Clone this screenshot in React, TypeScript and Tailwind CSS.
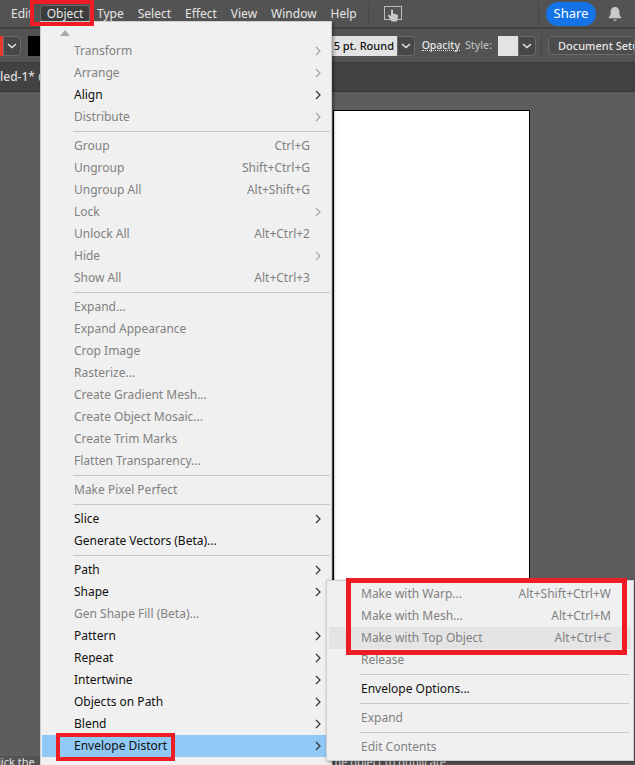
import React from "react";

const FONT = "font-['Noto_Sans','Open_Sans',sans-serif]";

type Row =
  | { sep: true }
  | { label: string; on?: boolean; arrow?: boolean; key2?: string; hi?: boolean };

const main: Row[] = [
  { label: "Transform", arrow: true },
  { label: "Arrange", arrow: true },
  { label: "Align", on: true, arrow: true },
  { label: "Distribute", arrow: true },
  { sep: true },
  { label: "Group", key2: "Ctrl+G" },
  { label: "Ungroup", key2: "Shift+Ctrl+G" },
  { label: "Ungroup All", key2: "Alt+Shift+G" },
  { label: "Lock", arrow: true },
  { label: "Unlock All", key2: "Alt+Ctrl+2" },
  { label: "Hide", arrow: true },
  { label: "Show All", key2: "Alt+Ctrl+3" },
  { sep: true },
  { label: "Expand..." },
  { label: "Expand Appearance" },
  { label: "Crop Image" },
  { label: "Rasterize..." },
  { label: "Create Gradient Mesh..." },
  { label: "Create Object Mosaic..." },
  { label: "Create Trim Marks" },
  { label: "Flatten Transparency..." },
  { sep: true },
  { label: "Make Pixel Perfect" },
  { sep: true },
  { label: "Slice", on: true, arrow: true },
  { label: "Generate Vectors (Beta)...", on: true },
  { sep: true },
  { label: "Path", on: true, arrow: true },
  { label: "Shape", on: true, arrow: true },
  { label: "Gen Shape Fill (Beta)..." },
  { label: "Pattern", on: true, arrow: true },
  { label: "Repeat", on: true, arrow: true },
  { label: "Intertwine", on: true, arrow: true },
  { label: "Objects on Path", on: true, arrow: true },
  { label: "Blend", on: true, arrow: true },
  { label: "Envelope Distort", on: true, arrow: true, hi: true },
];

const sub: Row[] = [
  { label: "Make with Warp...", key2: "Alt+Shift+Ctrl+W" },
  { label: "Make with Mesh...", key2: "Alt+Ctrl+M" },
  { label: "Make with Top Object", key2: "Alt+Ctrl+C", hi: true },
  { label: "Release" },
  { sep: true },
  { label: "Envelope Options...", on: true },
  { sep: true },
  { label: "Expand" },
  { sep: true },
  { label: "Edit Contents" },
];

function Chevron({ on }: { on?: boolean }) {
  return (
    <svg width="6" height="10" viewBox="0 0 6 10" className="shrink-0">
      <path d="M1 1l4 4-4 4" fill="none" stroke={on ? "#333" : "#a5a5a5"} strokeWidth="1.2" />
    </svg>
  );
}

function Down() {
  return (
    <svg width="10" height="6" viewBox="0 0 10 6">
      <path d="M1 1l4 3.6L9 1" fill="none" stroke="#e8e8e8" strokeWidth="1.4" />
    </svg>
  );
}

function MainRows() {
  return (
    <>
      {main.map((r, i) =>
        "sep" in r ? (
          <div key={i} className="h-[7px] flex items-center ml-[31px] mr-px">
            <div className="h-px w-full bg-[#c8c8c8]" />
          </div>
        ) : (
          <div
            key={i}
            className={`h-[22px] flex items-center pl-[32px] pr-[10px] ${r.hi ? "bg-[#90c8f6]" : ""} ${
              r.on ? "text-[#111111]" : "text-[#818181]"
            }`}
          >
            <span className="flex-1 whitespace-nowrap">{r.label}</span>
            {r.key2 && <span className="whitespace-nowrap mr-[11px]">{r.key2}</span>}
            {r.arrow && <Chevron on={r.on} />}
          </div>
        )
      )}
    </>
  );
}

function SubRows() {
  return (
    <>
      {sub.map((r, i) =>
        "sep" in r ? (
          <div key={i} className="h-[7px] flex items-center ml-[31px] mr-[2px]">
            <div className="h-px w-full bg-[#c8c8c8]" />
          </div>
        ) : (
          <div
            key={i}
            className={`h-[22px] flex items-center pl-[32px] pr-[20px] ${r.hi ? "bg-[#e4e4e4]" : ""} ${
              r.on ? "text-[#111111]" : "text-[#818181]"
            }`}
          >
            <span className="flex-1 whitespace-nowrap">{r.label}</span>
            {r.key2 && <span className="whitespace-nowrap">{r.key2}</span>}
          </div>
        )
      )}
    </>
  );
}

export default function App() {
  return (
    <div className={`${FONT} relative w-[635px] h-[765px] overflow-hidden bg-[#5d5d5d] text-[12px] leading-none flex flex-col`}>
      {/* Menu bar */}
      <div className="h-[29px] bg-[#535353] border-b-2 border-[#424242] flex items-center text-[#e6e6e6] shrink-0">
        <span className="ml-[11px] w-[29px]">Edit</span>
        <div className="w-[50px] h-[17px] ml-[0px] bg-[#3d3d3d] border border-[#6a6a6a] rounded-sm flex items-center justify-center">Object</div>
        <div className="flex ml-[7px] gap-[14px]">
          <span>Type</span>
          <span>Select</span>
          <span>Effect</span>
          <span>View</span>
          <span>Window</span>
          <span>Help</span>
        </div>
        <div className="w-px h-[20px] bg-[#484848] ml-[11px]" />
        <svg width="18" height="16" viewBox="0 0 18 16" className="ml-[15px]">
          <rect x="0.5" y="0.5" width="17" height="13" fill="none" stroke="#bdbdbd" />
          <path d="M7 4.5c0-1.3 2-1.3 2 0v3l4 1c1 .4 1 1 1 2l-1 5H7.5L4 10c-.5-1 .8-1.8 1.6-1L7 10z" fill="#c8c8c8" />
        </svg>
        <div className="flex-1" />
        <div className="w-px h-[24px] bg-[#484848] mr-[7px]" />
        <div className="w-[50px] h-[24px] rounded-full bg-[#1473e6] text-white text-[13px] flex items-center justify-center">Share</div>
        <svg width="14" height="16" viewBox="0 0 14 16" className="ml-[12px] mr-[13px]">
          <path d="M7 1c3 0 4.3 2.2 4.3 5 0 3 .7 4 2 5.5v.8H.7v-.8C2 10 2.7 9 2.7 6 2.700 3.200 4 1 7 1z" fill="#c9c9c9" />
          <path d="M5.300 13.500h3.400c0 1.800-3.400 1.800-3.400 0z" fill="#c9c9c9" />
        </svg>
      </div>

      {/* Control bar */}
      <div className="h-[34px] bg-[#535353] border-b border-[#3a3a3a] flex items-center shrink-0 text-[#e6e6e6]">
        <div className="w-[3px] h-[20px] bg-[#e8392c]" />
        <div className="w-[18px] h-[20px] border border-[#6a6a6a] bg-[#474747] rounded-r-sm flex items-center justify-center"><Down /></div>
        <div className="ml-[7px] w-[12px] h-[20px] bg-black" />
        <div className="flex-1" />
        <div className="w-[66px] h-[20px] bg-[#e3e3e3] text-[#111111] text-[11px] font-medium flex items-center pl-[3px]">5 pt. Round</div>
        <div className="w-[18px] h-[20px] bg-[#474747] border border-[#6a6a6a] rounded-r-sm flex items-center justify-center"><Down /></div>
        <span className="ml-[7px] text-[10.5px] font-medium border-b border-dotted border-[#ddd]">Opacity</span>
        <span className="ml-[5px] text-[10.5px] font-medium text-[#b9b9b9]">Style:</span>
        <div className="ml-[6px] w-[20px] h-[20px] bg-[#e3e3e3]" />
        <div className="w-[18px] h-[20px] bg-[#474747] border border-[#6a6a6a] rounded-r-sm flex items-center justify-center"><Down /></div>
        <div className="w-px h-[24px] bg-[#484848] ml-[5px]" />
        <div className="ml-[6px] w-[87px] h-[19px] pl-[9px] border border-[#6a6a6a] rounded-sm bg-[#4d4d4d] text-[11px] font-medium flex items-center whitespace-nowrap overflow-hidden">Document Setup</div>
      </div>

      {/* Tab bar */}
      <div className="h-[29px] bg-[#424242] border-b border-[#353535] flex items-center shrink-0 text-[#dcdcdc] font-medium">
        <span className="whitespace-nowrap">led-1* @</span>
      </div>

      {/* Canvas */}
      <div className="flex-1 min-h-0 flex flex-col">
        <div className="flex-1 min-h-0 pt-[18px] pl-[333px]">
          <div className="w-[197px] h-[500px] bg-white border border-black" />
        </div>
        <div className="h-[9px] bg-[#535353] text-[#e0e0e0] text-[11px] flex shrink-0 overflow-hidden whitespace-nowrap">
          <span className="-ml-[2px]">lick the</span>
          <span className="ml-[280px]">ag the object to duplicate</span>
        </div>
      </div>

      {/* Object menu highlight on top */}
      <div className="absolute left-[40px] top-[21px] w-[292px] h-[760px] bg-[#f0f0f0] border border-[#cfcfcf] pt-[18px] pl-[1px] shadow-[2px_2px_3px_rgba(0,0,0,0.35)]">
        <svg width="14" height="8" viewBox="0 0 14 8" className="absolute left-[17px] top-[7px]">
          <path d="M2 7l5-6 5 6z" fill="#a9a9a9" />
        </svg>
        <MainRows />
      </div>

      {/* Submenu */}
      <div className="absolute left-[326px] top-[580px] w-[308px] h-[181px] bg-[#f0f0f0] border border-[#cfcfcf] pt-[2px] px-[2px] shadow-[1px_1px_3px_rgba(0,0,0,0.35)]">
        <SubRows />
      </div>

      {/* Red annotation boxes */}
      <div className="absolute left-[30px] top-0 w-[64px] h-[26px] border-[4px] border-[#ee1c25]" />
      <div className="absolute left-[56px] top-[733px] w-[119px] h-[28px] border-[4px] border-[#ee1c25]" />
      <div className="absolute left-[346px] top-[578px] w-[281px] h-[77px] border-[5px] border-[#ee1c25]" />
    </div>
  );
}
